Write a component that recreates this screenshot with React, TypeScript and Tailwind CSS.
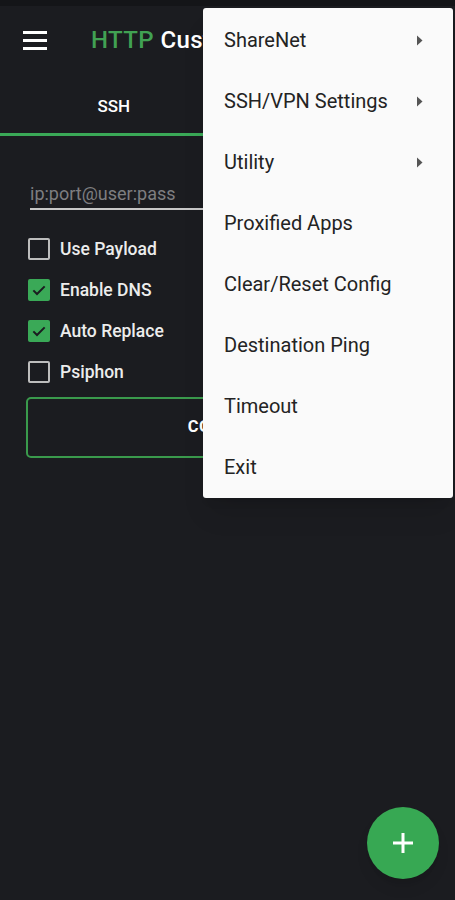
import React from "react";

const menuItems: { label: string; sub?: boolean }[] = [
  { label: "ShareNet", sub: true },
  { label: "SSH/VPN Settings", sub: true },
  { label: "Utility", sub: true },
  { label: "Proxified Apps" },
  { label: "Clear/Reset Config" },
  { label: "Destination Ping" },
  { label: "Timeout" },
  { label: "Exit" },
];

const checks = [
  { label: "Use Payload", on: false },
  { label: "Enable DNS", on: true },
  { label: "Auto Replace", on: true },
  { label: "Psiphon", on: false },
];

function Box({ on }: { on: boolean }) {
  if (on) {
    return (
      <div className="w-[22px] h-[22px] rounded-[2px] bg-[#3aa957] flex items-center justify-center">
        <svg width="16" height="16" viewBox="0 0 24 24" fill="none">
          <path d="M3.5 12.5l5.5 5.5L20.5 6.5" stroke="#1b1c20" strokeWidth="3" />
        </svg>
      </div>
    );
  }
  return <div className="w-[22px] h-[22px] rounded-[2px] border-[2.5px] border-[#bdbdbd]" />;
}

export default function App() {
  return (
    <div
      className="relative w-[455px] h-[900px] overflow-hidden bg-[#1b1c20]"
      style={{ fontFamily: "Roboto, 'Noto Sans', sans-serif" }}
    >
      <div className="h-[6px] bg-[#141518]" />
      {/* toolbar */}
      <div className="h-[70px] flex items-center pl-[23px]">
        <div className="flex flex-col gap-[5px] w-[24px] mt-[-2px]">
          <div className="h-[3px] bg-white" />
          <div className="h-[3px] bg-white" />
          <div className="h-[3px] bg-white" />
        </div>
        <div className="ml-[44px] text-[24px] font-medium tracking-[0.4px] mt-[-2px]">
          <span className="text-[#41a153]">HTTP</span>
          <span className="text-white"> Custom</span>
        </div>
      </div>
      {/* tabs */}
      <div className="flex h-[60px]">
        <div className="w-1/2 flex flex-col">
          <div className="flex-1 flex items-center justify-center text-white text-[17px] font-medium pt-[5px]">
            SSH
          </div>
          <div className="h-[3px] bg-[#3aa957]" />
        </div>
        <div className="w-1/2 flex flex-col">
          <div className="flex-1 flex items-center justify-center text-[#bdbdbd] text-[17px] font-medium pt-[5px]">
            HTTP
          </div>
          <div className="h-[3px]" />
        </div>
      </div>
      {/* form */}
      <div className="px-[26px] pt-[44px]">
        <div className="ml-[4px] mr-[4px] border-b-2 border-[#c8c8c8] pb-[1px] text-[18px] text-[#7e7e80] leading-[27px]">
          ip:port@user:pass
        </div>
        <div className="mt-[28px] flex flex-col gap-[19px] pl-[2px]">
          {checks.map((c) => (
            <div key={c.label} className="flex items-center h-[22px]">
              <Box on={c.on} />
              <span className="ml-[10px] text-[17.5px] text-[#ececec] font-medium">{c.label}</span>
            </div>
          ))}
        </div>
        <div className="mt-[14px] h-[61px] rounded-[5px] border-2 border-[#3a9a4c] flex items-center justify-center text-white text-[16.5px] font-bold tracking-[0.6px]">
          CONNECT
        </div>
      </div>

      {/* FAB */}
      <div className="absolute left-[367px] top-[807px] w-[72px] h-[72px] rounded-full bg-[#37a853] shadow-lg flex items-center justify-center">
        <svg width="22" height="22" viewBox="0 0 22 22">
          <path d="M11 1v20M1 11h20" stroke="white" strokeWidth="3" />
        </svg>
      </div>

      {/* overflow menu */}
      <div className="absolute left-[203px] top-[8px] w-[250px] rounded-[3px] bg-[#fafafa] shadow-xl py-[1px]">
        {menuItems.map((m) => (
          <div key={m.label} className="h-[61px] flex items-center pl-[21px] pr-[30px] pt-[1px]">
            <span className="flex-1 text-[20px] text-[#232323]">{m.label}</span>
            {m.sub && (
              <svg width="7" height="11" viewBox="0 0 7 11">
                <path d="M1 0.5L6.5 5.5L1 10.5Z" fill="#555" />
              </svg>
            )}
          </div>
        ))}
      </div>
    </div>
  );
}
